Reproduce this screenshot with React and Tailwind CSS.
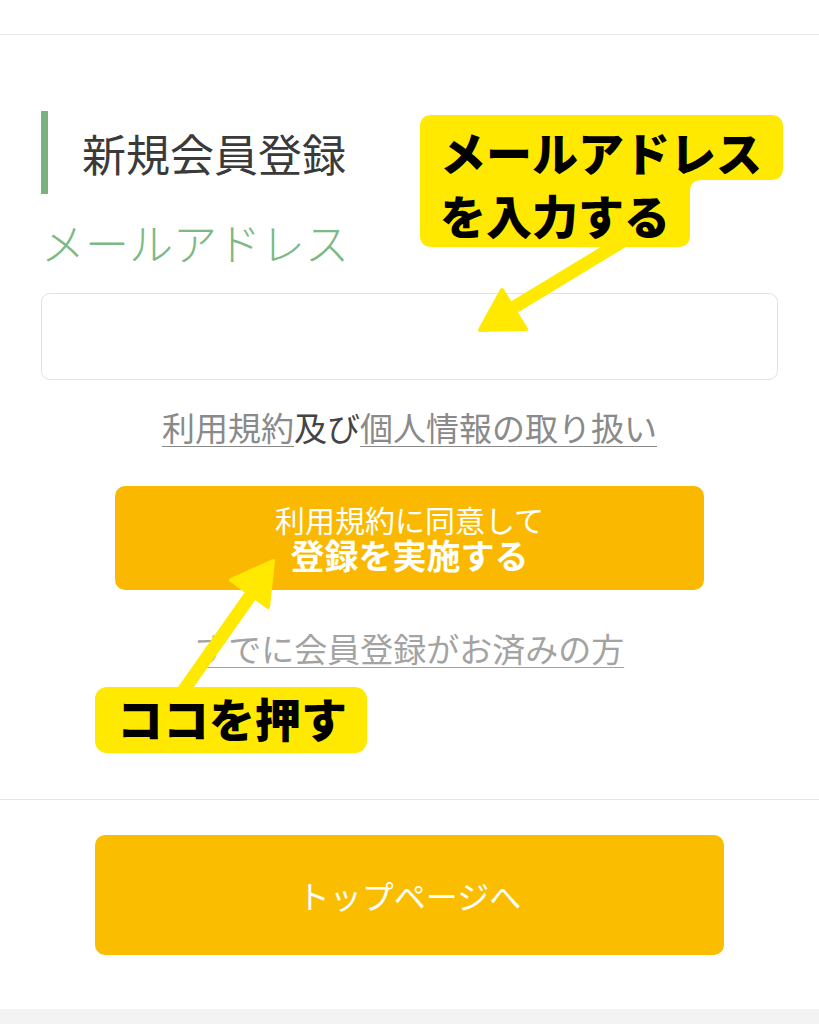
import React from 'react';

const YELLOW = '#ffe900';

function Annotations() {
  return (
    <>
      <svg
        className="absolute left-0 top-0 pointer-events-none"
        width="819"
        height="1024"
        viewBox="0 0 819 1024"
      >
        {/* callout: メールアドレスを入力する */}
        <path
          d="M432,115 H771 Q783,115 783,127 V168 Q783,180 771,180 H702 Q690,180 690,192 V235 Q690,247 678,247 H432 Q420,247 420,235 V127 Q420,115 432,115 Z"
          fill={YELLOW}
        />
        <line x1="628" y1="238" x2="503" y2="314" stroke={YELLOW} strokeWidth="13" strokeLinecap="round" />
        <polygon points="480,330 502,290 526,329" fill={YELLOW} stroke={YELLOW} strokeWidth="4" strokeLinejoin="round" />

        {/* callout: ココを押す */}
        <rect x="95" y="687" width="272" height="66" rx="12" fill={YELLOW} />
        <line x1="181" y1="694" x2="253" y2="592" stroke={YELLOW} strokeWidth="13" strokeLinecap="round" />
        <polygon points="273,561 231,580 268,607" fill={YELLOW} stroke={YELLOW} strokeWidth="4" strokeLinejoin="round" />
      </svg>

      <div className="absolute left-[440px] top-[128px] flex flex-col gap-[17px] text-[46px] leading-none font-black text-black tracking-[0px] pointer-events-none">
        <span>メールアドレス</span>
        <span>を入力する</span>
      </div>
      <div className="absolute left-[117px] top-[694px] text-[46px] leading-none font-black text-black pointer-events-none">
        ココを押す
      </div>
    </>
  );
}

export default function App() {
  return (
    <div className="relative w-[819px] h-[1024px] overflow-hidden bg-white font-['Noto_Sans_CJK_JP','Noto_Sans_CJK_SC',sans-serif]">
      <div className="h-[35px] border-b border-[#e6e6e6]" />

      <section className="px-[41px] pt-[76px] pb-[134px]">
        <div className="h-[83px] border-l-[7px] border-[#79b27f] pl-[34px] flex items-center">
          <h1 className="text-[44px] leading-none text-[#3a3a3a]">新規会員登録</h1>
        </div>

        <p className="mt-[26px] text-[44px] leading-none text-[#7db985] font-light">
          メールアドレス
        </p>

        <input
          type="email"
          className="mt-[29px] block w-full h-[87px] rounded-[9px] border border-[#e2e2e2] px-4 text-[30px] outline-none"
        />

        <p className="mt-[31px] text-center text-[33px] leading-none text-[#444]">
          <a className="text-[#8a8a8a] underline decoration-1 underline-offset-[5px]">利用規約</a>
          及び
          <a className="text-[#8a8a8a] underline decoration-1 underline-offset-[5px]">個人情報の取り扱い</a>
        </p>

        <button className="mt-[42px] mx-auto flex flex-col items-center justify-center w-[589px] h-[104px] rounded-[10px] bg-[#fab900] text-white">
          <span className="text-[30px] leading-[34px]">利用規約に同意して</span>
          <span className="text-[34px] leading-[38px] font-bold">登録を実施する</span>
        </button>

        <p className="mt-[42px] text-center text-[33px] leading-none">
          <a className="text-[#a3a3a3] underline decoration-1 underline-offset-[5px]">すでに会員登録がお済みの方</a>
        </p>
      </section>

      <div className="border-t border-[#e6e6e6] pt-[35px] pb-[54px]">
        <button className="mx-auto flex items-center justify-center w-[629px] h-[120px] rounded-[10px] bg-[#fbbd00] text-white text-[32px] leading-none">
          トップページへ
        </button>
      </div>

      <div className="h-[30px] bg-[#f3f3f3]" />

      <Annotations />
    </div>
  );
}
